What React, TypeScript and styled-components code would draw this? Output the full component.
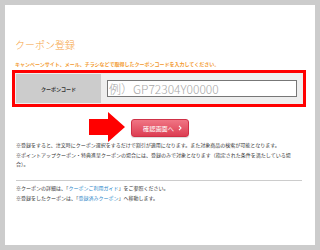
import styled, { createGlobalStyle } from 'styled-components';

const GlobalStyle = createGlobalStyle`
  body {
    margin: 0;
    background: #cccccc;
    font-family: "Noto Sans CJK JP", "Noto Sans", sans-serif;
    color: #333333;
  }
`;

const Wrap = styled.div`
  width: 320px;
  height: 250px;
  padding: 5px;
  box-sizing: border-box;
`;

const Panel = styled.div`
  background: #ffffff;
  height: 240px;
  padding-top: 34px;
  box-sizing: border-box;
  overflow: hidden;
`;

const Title = styled.h2`
  margin: 0 0 0 10px;
  font-size: 10px;
  line-height: 12px;
  font-weight: 300;
  color: #f6a444;
`;

const Lead = styled.p`
  margin: 9px 0 0 10px;
  font-size: 5px;
  line-height: 7px;
  font-weight: 700;
  color: #f39a2e;
  white-space: nowrap;
`;

// 赤枠
const RedBox = styled.div`
  margin: 3px 0 0 7px;
  width: 294px;
  border: 3px solid #ff0000;
  padding: 1px;
  background: #eeeeee;
  box-sizing: border-box;
  display: flex;
`;

const LabelCell = styled.div`
  width: 85px;
  background: #cccccc;
  display: flex;
  align-items: center;
  justify-content: center;
  font-size: 5px;
  font-weight: 700;
  color: #333333;
`;

const InputCell = styled.div`
  flex: 1;
  padding: 6px 5px 6px 6px;
`;

const CodeInput = styled.input`
  display: block;
  width: 100%;
  height: 17px;
  box-sizing: border-box;
  border: 1px solid #777777;
  background: #ffffff;
  padding: 0 0 0 1px;
  font-family: "Noto Sans CJK JP", "Noto Sans", sans-serif;
  font-size: 12px;
  font-weight: 300;
  outline: none;
  &::placeholder {
    color: #a8a8a8;
  }
`;

const ButtonRow = styled.div`
  margin-top: 12px;
  display: flex;
  justify-content: center;
`;

const ButtonWrap = styled.div`
  position: relative;
`;

const Arrow = styled.svg`
  position: absolute;
  left: -42px;
  top: -7px;
`;

const ConfirmBtn = styled.button`
  width: 58px;
  height: 18px;
  border-radius: 3px;
  border: 1px solid #cf3046;
  background: linear-gradient(#f07584, #dc3d52);
  color: #ffffff;
  font-family: "Noto Sans CJK JP", "Noto Sans", sans-serif;
  font-size: 6.2px;
  padding: 0 0 0 5px;
  display: flex;
  align-items: center;
  justify-content: center;
  gap: 4px;
  box-shadow: 0 1px 1px rgba(0, 0, 0, 0.15);
`;

const Notes = styled.div`
  margin: 3px 0 0 11px;
  width: 278px;
  font-size: 5px;
  line-height: 9.5px;
  color: #333333;
`;

const Note = styled.p`
  margin: 0;
`;

const Divider = styled.hr`
  margin: 11px 0 0 11px;
  width: 286px;
  border: none;
  border-top: 1px solid #cccccc;
`;

const Guide = styled.div`
  margin: 2px 0 0 11px;
  font-size: 5px;
  line-height: 10px;
  color: #333333;
`;

const Link = styled.a`
  color: #2b86c9;
  text-decoration: none;
`;

const App = () => {
  return (
    <Wrap>
      <GlobalStyle />
      <Panel>
        <Title>クーポン登録</Title>
        <Lead>キャンペーンサイト、メール、チラシなどで取得したクーポンコードを入力してください。</Lead>

        <RedBox>
          <LabelCell>クーポンコード</LabelCell>
          <InputCell>
            <CodeInput placeholder="例）GP72304Y00000" />
          </InputCell>
        </RedBox>

        <ButtonRow>
          <ButtonWrap>
            <Arrow width="37" height="31" viewBox="0 0 37 31">
              <polygon points="0,7 19,7 19,0 36,15 19,30 19,23 0,23" fill="#ff0000" />
            </Arrow>
            <ConfirmBtn>
              確認画面へ
              <svg width="4" height="6" viewBox="0 0 4 6">
                <polyline points="1,0.8 3,3 1,5.2" fill="none" stroke="#fff" strokeWidth="1.1" />
              </svg>
            </ConfirmBtn>
          </ButtonWrap>
        </ButtonRow>

        <Notes>
          <Note>※登録をすると、注文時にクーポン選択をするだけで割引が適用になります。また対象商品の検索が可能となります。</Note>
          <Note>※ポイントアップクーポン・特典進呈クーポンの場合には、登録のみで対象となります（指定された条件を満たしている場合）。</Note>
        </Notes>

        <Divider />

        <Guide>
          <Note>
            ※クーポンの詳細は、「<Link href="#">クーポンご利用ガイド</Link>」をご参照ください。
          </Note>
          <Note>
            ※登録をしたクーポンは、「<Link href="#">登録済みクーポン</Link>」へ移動します。
          </Note>
        </Guide>
      </Panel>
    </Wrap>
  );
};

export default App;
